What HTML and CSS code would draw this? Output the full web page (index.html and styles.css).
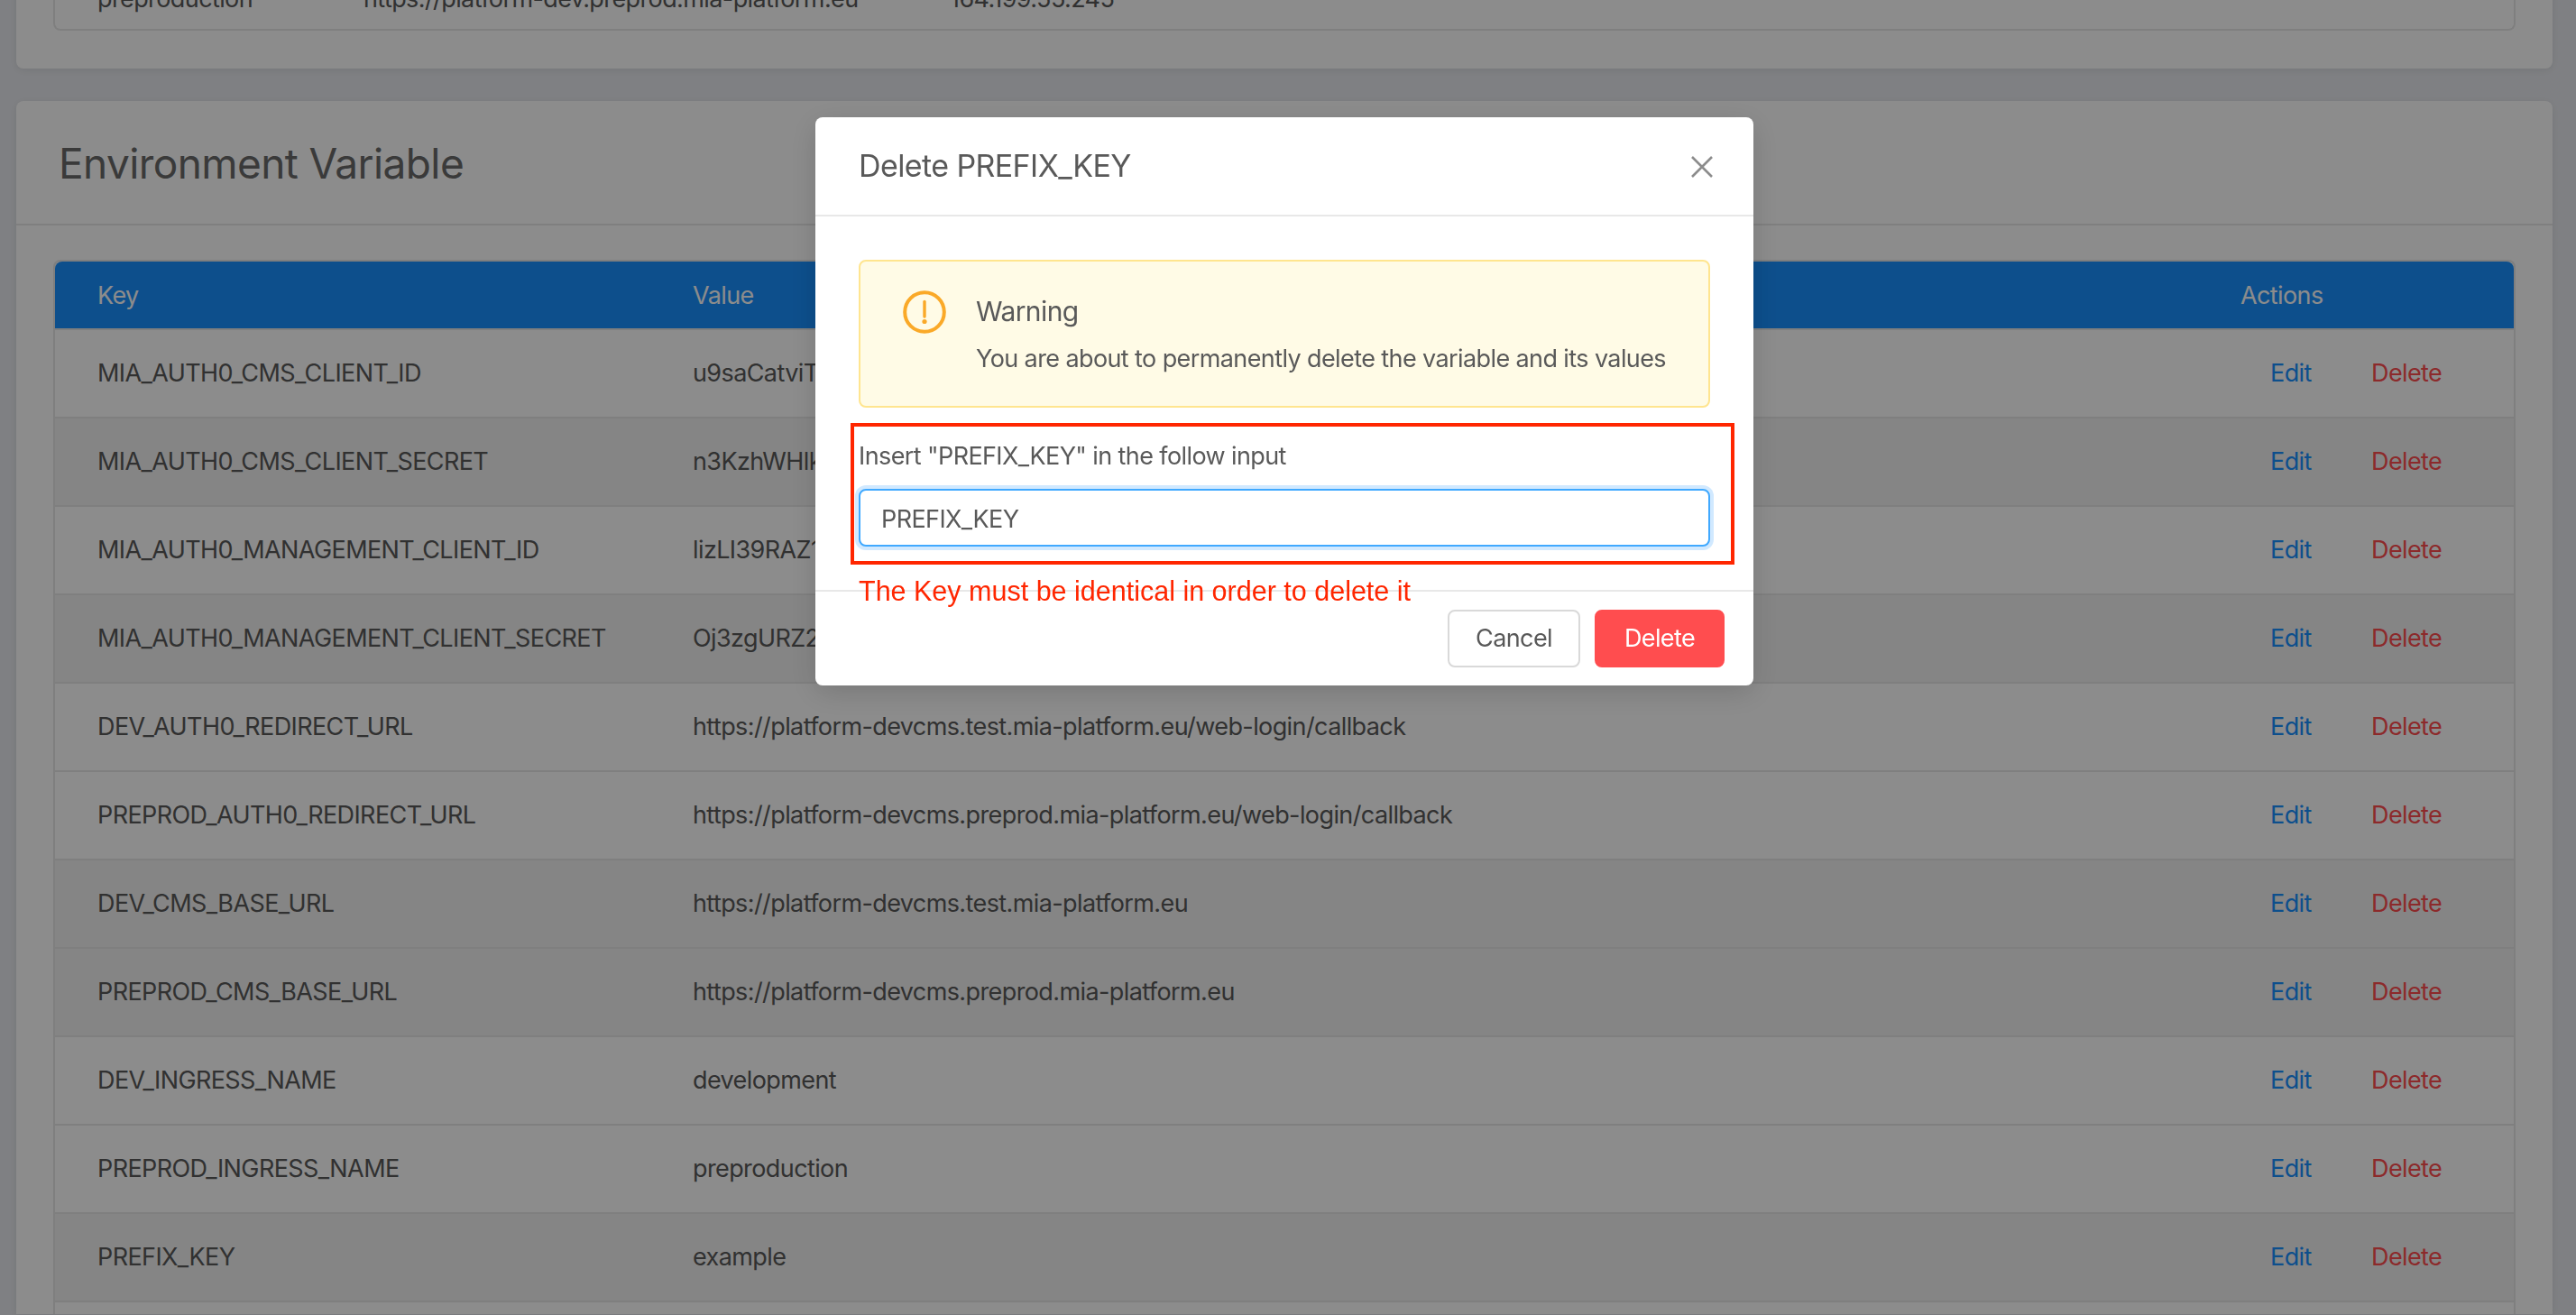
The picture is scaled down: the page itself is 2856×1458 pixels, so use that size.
FILE: index.html
```html
<!DOCTYPE html>
<html lang="en">
<head>
    <meta charset="UTF-8">
    <title>Environment Variable</title>
    <link rel="stylesheet" href="styles.css">
</head>
<body>
    <div class="page">
        <div class="card card-top">
            <div class="table-box">
                <div class="top-row">
                    <span class="top-name">preproduction</span>
                    <span class="top-url">https://platform-dev.preprod.mia-platform.eu</span>
                    <span>164.199.55.245</span>
                </div>
            </div>
        </div>

        <div class="card card-vars">
            <h2 class="card-title">Environment Variable</h2>
            <div class="card-body">
                <table class="var-table">
                    <colgroup>
                        <col class="col-key">
                        <col>
                        <col class="col-actions">
                    </colgroup>
                    <thead>
                        <tr>
                            <th>Key</th>
                            <th>Value</th>
                            <th>Actions</th>
                        </tr>
                    </thead>
                    <tbody>
                        <tr>
                            <td>MIA_AUTH0_CMS_CLIENT_ID</td>
                            <td>u9saCatviTbQ</td>
                            <td class="actions"><a class="edit">Edit</a><a class="delete">Delete</a></td>
                        </tr>
                        <tr class="alt">
                            <td>MIA_AUTH0_CMS_CLIENT_SECRET</td>
                            <td>n3KzhWHlkR</td>
                            <td class="actions"><a class="edit">Edit</a><a class="delete">Delete</a></td>
                        </tr>
                        <tr>
                            <td>MIA_AUTH0_MANAGEMENT_CLIENT_ID</td>
                            <td>lizLI39RAZ1x</td>
                            <td class="actions"><a class="edit">Edit</a><a class="delete">Delete</a></td>
                        </tr>
                        <tr class="alt">
                            <td>MIA_AUTH0_MANAGEMENT_CLIENT_SECRET</td>
                            <td>Oj3zgURZ2k</td>
                            <td class="actions"><a class="edit">Edit</a><a class="delete">Delete</a></td>
                        </tr>
                        <tr>
                            <td>DEV_AUTH0_REDIRECT_URL</td>
                            <td>https://platform-devcms.test.mia-platform.eu/web-login/callback</td>
                            <td class="actions"><a class="edit">Edit</a><a class="delete">Delete</a></td>
                        </tr>
                        <tr>
                            <td>PREPROD_AUTH0_REDIRECT_URL</td>
                            <td>https://platform-devcms.preprod.mia-platform.eu/web-login/callback</td>
                            <td class="actions"><a class="edit">Edit</a><a class="delete">Delete</a></td>
                        </tr>
                        <tr class="alt">
                            <td>DEV_CMS_BASE_URL</td>
                            <td>https://platform-devcms.test.mia-platform.eu</td>
                            <td class="actions"><a class="edit">Edit</a><a class="delete">Delete</a></td>
                        </tr>
                        <tr class="alt">
                            <td>PREPROD_CMS_BASE_URL</td>
                            <td>https://platform-devcms.preprod.mia-platform.eu</td>
                            <td class="actions"><a class="edit">Edit</a><a class="delete">Delete</a></td>
                        </tr>
                        <tr>
                            <td>DEV_INGRESS_NAME</td>
                            <td>development</td>
                            <td class="actions"><a class="edit">Edit</a><a class="delete">Delete</a></td>
                        </tr>
                        <tr>
                            <td>PREPROD_INGRESS_NAME</td>
                            <td>preproduction</td>
                            <td class="actions"><a class="edit">Edit</a><a class="delete">Delete</a></td>
                        </tr>
                        <tr class="alt">
                            <td>PREFIX_KEY</td>
                            <td>example</td>
                            <td class="actions"><a class="edit">Edit</a><a class="delete">Delete</a></td>
                        </tr>
                        <tr class="row-cut">
                            <td></td>
                            <td></td>
                            <td></td>
                        </tr>
                    </tbody>
                </table>
            </div>
        </div>
    </div>

    <div class="overlay">
        <div class="modal">
            <div class="modal-header">
                <span class="modal-title">Delete PREFIX_KEY</span>
                <svg class="modal-close" viewBox="0 0 24 24" width="24" height="24">
                    <path d="M1 1L23 23M23 1L1 23" fill="none" stroke="#8c8c8c" stroke-width="2.6"/>
                </svg>
            </div>
            <div class="modal-body">
                <div class="alert">
                    <svg class="alert-icon" viewBox="0 0 48 48" width="48" height="48">
                        <circle cx="24" cy="24" r="21.8" fill="none" stroke="#faa928" stroke-width="4"/>
                        <path d="M24 12.5V29" fill="none" stroke="#faa928" stroke-width="3.4" stroke-linecap="round"/>
                        <circle cx="24" cy="34.5" r="2.6" fill="#faa928"/>
                    </svg>
                    <div class="alert-text">
                        <div class="alert-title">Warning</div>
                        <div class="alert-desc">You are about to permanently delete the variable and its values</div>
                    </div>
                </div>
                <label class="confirm-label" for="confirmKey">Insert "PREFIX_KEY" in the follow input</label>
                <input class="confirm-input" id="confirmKey" type="text" value="PREFIX_KEY">
            </div>
            <div class="modal-footer">
                <button class="btn btn-cancel">Cancel</button>
                <button class="btn btn-danger">Delete</button>
            </div>
            <!-- annotation drawn on top of the dialog -->
            <div class="mark-box"></div>
            <div class="mark-text">The Key must be identical in order to delete it</div>
        </div>
    </div>
</body>
</html>
```

FILE: styles.css
```css
* {
    box-sizing: border-box;
}
html, body {
    height: 100%;
}
html {
    overflow: hidden;
}
body {
    margin: 0;
    overflow: hidden;
    background: #e8eaef;
    font-family: Inter, "Liberation Sans", sans-serif;
    font-size: 27px;
    line-height: 44px;
    letter-spacing: -0.6px;
    color: #595959;
}
.page {
    margin-top: -36px;
    padding: 0 26px 0 18px;
}
.card {
    background: #fff;
    border-radius: 8px;
    box-shadow: 0 2px 10px rgba(0, 0, 0, 0.08);
}
.card-top {
    padding: 0 41px 42px;
}
.card-vars {
    margin-top: 36px;
    border-radius: 8px 8px 0 0;
}
.table-box {
    border: 2px solid #e8e8e8;
    border-top: 0;
    border-radius: 0 0 8px 8px;
}
.top-row {
    display: flex;
    padding: 13px 48px 11px 47px;
}
.top-name {
    width: 295px;
}
.top-url {
    width: 650px;
}
.card-title {
    margin: 0;
    height: 138px;
    padding: 0 47px;
    border-bottom: 2px solid #e8e8e8;
    font-size: 46px;
    font-weight: 400;
    line-height: 138px;
    color: #6b6b6b;
}
.card-body {
    padding: 38px 41px 0;
}
.var-table {
    width: 100%;
    table-layout: fixed;
    border-collapse: separate;
    border-spacing: 0;
    border: 2px solid #e8e8e8;
    border-bottom: 0;
    border-radius: 8px 8px 0 0;
}
.col-key {
    width: 660px;
}
.col-actions {
    width: 350px;
}
.var-table th {
    height: 76px;
    padding: 2px 0 0 47px;
    background: #1890ff;
    border-bottom: 2px solid #e8e8e8;
    color: #fff;
    font-weight: 400;
    text-align: left;
}
.var-table th:first-child {
    border-top-left-radius: 8px;
}
.var-table th:last-child {
    border-top-right-radius: 8px;
}
.var-table td {
    height: 98px;
    padding: 0 0 0 47px;
    border-bottom: 2px solid #e8e8e8;
    white-space: nowrap;
}
.var-table tr.alt td {
    background: #f3f3f3;
}
.var-table tr.row-cut td {
    height: 13px;
    border-bottom: 0;
}
.var-table td.actions {
    padding-left: 80px;
}
.edit {
    display: inline-block;
    width: 112px;
    color: #1890ff;
}
.delete {
    color: #ff4d4f;
}
.overlay {
    position: fixed;
    top: 0;
    left: 0;
    right: 0;
    bottom: 0;
    padding: 130px 0 0 904px;
    background: rgba(0, 0, 0, 0.45);
}
.modal {
    position: relative;
    width: 1040px;
    background: #fff;
    border-radius: 8px;
    box-shadow: 0 8px 32px rgba(0, 0, 0, 0.15);
}
.modal-header {
    display: flex;
    align-items: center;
    justify-content: space-between;
    height: 110px;
    padding: 0 45px 0 48px;
    border-bottom: 2px solid #e8e8e8;
}
.modal-title {
    font-size: 34px;
}
.modal-close {
    margin-top: 2px;
}
.modal-body {
    padding: 48px;
}
.alert {
    display: flex;
    gap: 33px;
    height: 164px;
    padding: 32px 0 0 47px;
    background: #fffbe6;
    border: 2px solid #ffe58f;
    border-radius: 8px;
}
.alert-icon {
    flex: none;
}
.alert-text {
    margin-top: 1px;
    white-space: nowrap;
}
.alert-title {
    margin-bottom: 9px;
    font-size: 30px;
}
.confirm-label {
    display: block;
    margin: 32px 0 14px;
}
.confirm-input {
    display: block;
    width: 100%;
    height: 64px;
    padding: 2px 23px 0;
    background: #fff;
    border: 2px solid #40a9ff;
    border-radius: 8px;
    box-shadow: 0 0 0 4px rgba(24, 144, 255, 0.2);
    outline: none;
    font: inherit;
    letter-spacing: inherit;
    color: #595959;
}
.modal-footer {
    display: flex;
    justify-content: flex-end;
    gap: 16px;
    padding: 20px 32px;
    border-top: 2px solid #e8e8e8;
}
.btn {
    height: 64px;
    padding: 0;
    background: #fff;
    border: 2px solid #d9d9d9;
    border-radius: 8px;
    font: inherit;
    letter-spacing: inherit;
    color: #595959;
}
.btn-cancel {
    width: 147px;
}
.btn-danger {
    width: 144px;
    background: #ff4d4f;
    border-color: #ff4d4f;
    color: #fff;
}
.mark-box {
    position: absolute;
    left: 39px;
    top: 339px;
    width: 980px;
    height: 157px;
    border: 4px solid #ff2600;
}
.mark-text {
    position: absolute;
    left: 48px;
    top: 503px;
    font-family: "Liberation Sans", Arial, sans-serif;
    font-size: 30.5px;
    letter-spacing: 0;
    color: #ff2600;
}
```
